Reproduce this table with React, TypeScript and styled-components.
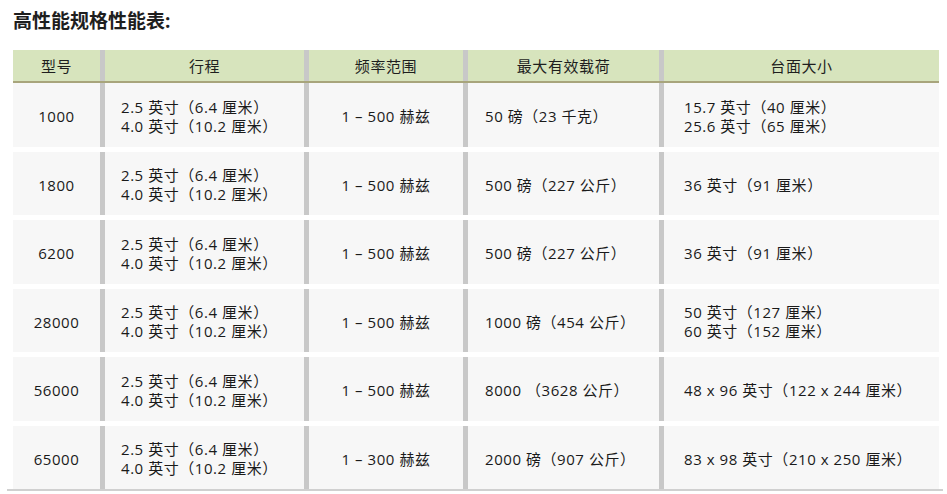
import { createGlobalStyle, styled } from 'styled-components';

const GlobalStyle = createGlobalStyle`
  body {
    margin: 0;
    background: #ffffff;
    font-family: 'Open Sans', 'Noto Sans CJK SC', sans-serif;
    color: #1a1a1a;
  }
`;

type Align = 'left' | 'center';

const columns: { title: string; align: Align }[] = [
  { title: '型号', align: 'center' },
  { title: '行程', align: 'left' },
  { title: '频率范围', align: 'center' },
  { title: '最大有效载荷', align: 'left' },
  { title: '台面大小', align: 'left' },
];

const stroke = ['2.5 英寸（6.4 厘米）', '4.0 英寸（10.2 厘米）'];

const rows: string[][][] = [
  [['1000'], stroke, ['1 – 500 赫兹'], ['50 磅（23 千克）'], ['15.7 英寸（40 厘米）', '25.6 英寸（65 厘米）']],
  [['1800'], stroke, ['1 – 500 赫兹'], ['500 磅（227 公斤）'], ['36 英寸（91 厘米）']],
  [['6200'], stroke, ['1 – 500 赫兹'], ['500 磅（227 公斤）'], ['36 英寸（91 厘米）']],
  [['28000'], stroke, ['1 – 500 赫兹'], ['1000 磅（454 公斤）'], ['50 英寸（127 厘米）', '60 英寸（152 厘米）']],
  [['56000'], stroke, ['1 – 500 赫兹'], ['8000 （3628 公斤）'], ['48 x 96 英寸（122 x 244 厘米）']],
  [['65000'], stroke, ['1 – 300 赫兹'], ['2000 磅（907 公斤）'], ['83 x 98 英寸（210 x 250 厘米）']],
];

const App = () => {
  return (
    <>
      <GlobalStyle />
      <Page>
        <Title>高性能规格性能表:</Title>
        <TableWrap>
          <HeaderRow>
            {columns.map((col, i) => (
              <HeaderCell key={col.title} $first={i === 0}>
                {col.title}
              </HeaderCell>
            ))}
          </HeaderRow>
          {rows.map((row, r) => (
            <DataRow key={r}>
              {row.map((lines, i) => (
                <DataCell key={i} $first={i === 0} $align={columns[i].align} $col={i}>
                  {lines.map((line) => (
                    <Line key={line}>{line}</Line>
                  ))}
                </DataCell>
              ))}
            </DataRow>
          ))}
        </TableWrap>
      </Page>
    </>
  );
};

export default App;

const Page = styled.div`
  width: 947px;
  height: 494px;
  padding: 9px 8px 0 13px;
  box-sizing: border-box;
  overflow: hidden;
`;

const Title = styled.h1`
  margin: 0;
  font-size: 19px;
  line-height: 25px;
  font-weight: 700;
  color: #1e1e1e;
`;

const TableWrap = styled.div`
  margin-top: 16px;
  width: 926px;
  display: flex;
  flex-direction: column;
  gap: 5px;
  position: relative;

  &::after {
    content: '';
    position: absolute;
    left: -6px;
    right: -4px;
    bottom: -2px;
    height: 2px;
    background: #d0d0d0;
  }
`;

const gridCols = '87px 204px 159px 196px 280px';

const HeaderRow = styled.div`
  display: grid;
  grid-template-columns: ${gridCols};
  height: 33px;
  background: #d7e4bd;
  border-bottom: 2px solid #a8a57c;
  box-sizing: border-box;
  margin-bottom: -5px;
`;

const HeaderCell = styled.div<{ $first: boolean }>`
  display: flex;
  align-items: center;
  justify-content: center;
  border-left: ${(p) => (p.$first ? 'none' : '5px solid #c8c8c8')};
  font-size: 15px;
  letter-spacing: 0.6px;
  color: #1e1e1e;
`;

const DataRow = styled.div`
  display: grid;
  grid-template-columns: ${gridCols};
  height: 63.5px;
  background: #f7f7f7;
`;

const padLeft = [0, 16, 0, 17, 20];

const DataCell = styled.div<{ $first: boolean; $align: Align; $col: number }>`
  display: flex;
  flex-direction: column;
  justify-content: center;
  align-items: ${(p) => (p.$align === 'center' ? 'center' : 'flex-start')};
  padding-left: ${(p) => padLeft[p.$col]}px;
  padding-top: 4px;
  border-left: ${(p) => (p.$first ? 'none' : '5px solid #c8c8c8')};
  font-size: 15px;
  letter-spacing: 0.55px;
  line-height: 19px;
  color: #1a1a1a;
`;

const Line = styled.div`
  white-space: nowrap;
`;
